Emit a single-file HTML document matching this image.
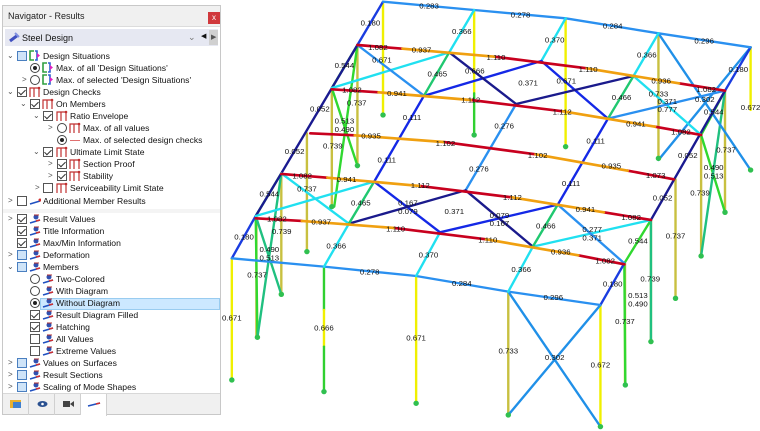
<!DOCTYPE html>
<html><head><meta charset="utf-8"><style>
*{margin:0;padding:0;box-sizing:border-box}
body{width:760px;height:431px;background:#fff;position:relative;overflow:hidden;font-family:"Liberation Sans",sans-serif;font-size:8.6px;color:#111}
.panel{position:absolute;left:2px;top:5px;width:219px;height:410px;border:1px solid #c8c8c8;background:#fff}
.title{position:absolute;left:0;top:0;width:217px;height:21px;background:#f0f0f0;border-bottom:1px solid #dcdcdc}
.title span{position:absolute;left:5px;top:5px;font-size:9px;color:#222}
.close{position:absolute;left:205px;top:6px;width:12px;height:12px;background:#d0383c;color:#fff;font-size:8px;text-align:center;line-height:12px}
.dd{position:absolute;left:2px;top:23px;width:213px;height:17px;background:#e6e8f2}
.dd span{position:absolute;left:17px;top:4px;font-size:9px}
.r{position:absolute;height:12px;white-space:nowrap}
.t{position:absolute;top:1px}
.ch{position:absolute;top:1px;font-size:8px;color:#555}
.cb{position:absolute;top:1px;width:10px;height:10px;border:1px solid #555;background:#fff}
.cb.q{background:#cfe4f8;border-color:#4a7fc0}
.cb.k::after{content:"";position:absolute;left:2px;top:0px;width:3px;height:6px;border:solid #333;border-width:0 1px 1px 0;transform:rotate(45deg)}
.rd{position:absolute;top:1px;width:10px;height:10px;border:1px solid #444;border-radius:50%;background:#fff}
.rd.on::after{content:"";position:absolute;left:2px;top:2px;width:4px;height:4px;border-radius:50%;background:#222}
.ic{position:absolute;top:0}
.tab{position:absolute;top:0;width:26px;height:21px;border-right:1px solid #d0d0d0}
</style></head><body>
<div class="panel">
<div class="title"><span>Navigator - Results</span><div class="close">x</div></div>
<div class="dd"><svg style="position:absolute;left:4px;top:3px" width="11" height="11"><path d="M1 9 L9 3" stroke="#4050c0" stroke-width="3"/><path d="M6 1 L10 5" stroke="#8090e0" stroke-width="2"/></svg><span>Steel Design</span><span style="left:183px;top:3px;color:#777">&#8964;</span><span style="left:196px;top:3px;font-size:7px">&#9664;</span><div style="position:absolute;left:204px;top:1px;width:9px;height:15px;background:#d0d0d0"></div><span style="left:206px;top:4px;font-size:7px;color:#555">&#9654;</span></div>
</div>
<div style="position:absolute;left:40px;top:298px;width:180px;height:12px;background:#cce8ff;border:1px solid #99ccf0"></div>

<svg width="0" height="0" style="position:absolute"><defs>
<g id="ds"><path d="M5 1H1V10H5" stroke="#30a040" stroke-width="1.6" fill="none"/><path d="M6 1H8V10H6" stroke="#3060d0" stroke-width="1.6" fill="none"/><path d="M8 3L11 5.5L8 8Z" fill="#e020c0"/></g>
<g id="dc"><path d="M1 11V2H10V11M5 2V11" stroke="#c03030" stroke-width="1.2" fill="none"/><circle cx="10" cy="2" r="1.3" fill="#c03030"/></g>
<g id="rs"><path d="M1 10L11 7" stroke="#2050c0" stroke-width="1.6"/><path d="M7 8L11 7" stroke="#d03030" stroke-width="1.6"/><circle cx="7" cy="4" r="2.5" fill="#3050b0"/><path d="M5 2H10" stroke="#b03030" stroke-width="1"/></g>
</defs></svg>

<div class="r" style="top:50px;left:0"><span class="ch" style="left:7px">&#8964;</span><span class="cb q" style="left:17px"></span><svg class="ic" style="left:29px" width="12" height="12"><use href="#ds"/></svg><span class="t" style="left:43px">Design Situations</span></div>
<div class="r" style="top:62px;left:0"><span class="rd on" style="left:30px"></span><svg class="ic" style="left:42px" width="12" height="12"><use href="#ds"/></svg><span class="t" style="left:56px">Max. of all 'Design Situations'</span></div>
<div class="r" style="top:74px;left:0"><span class="ch" style="left:22px">&gt;</span><span class="rd" style="left:30px"></span><svg class="ic" style="left:42px" width="12" height="12"><use href="#ds"/></svg><span class="t" style="left:56px">Max. of selected 'Design Situations'</span></div>
<div class="r" style="top:86px;left:0"><span class="ch" style="left:7px">&#8964;</span><span class="cb k" style="left:17px"></span><svg class="ic" style="left:29px" width="12" height="12"><use href="#dc"/></svg><span class="t" style="left:43px">Design Checks</span></div>
<div class="r" style="top:98px;left:0"><span class="ch" style="left:20px">&#8964;</span><span class="cb k" style="left:30px"></span><svg class="ic" style="left:42px" width="12" height="12"><use href="#dc"/></svg><span class="t" style="left:56px">On Members</span></div>
<div class="r" style="top:110px;left:0"><span class="ch" style="left:33px">&#8964;</span><span class="cb k" style="left:43px"></span><svg class="ic" style="left:56px" width="12" height="12"><use href="#dc"/></svg><span class="t" style="left:70px">Ratio Envelope</span></div>
<div class="r" style="top:122px;left:0"><span class="ch" style="left:48px">&gt;</span><span class="rd" style="left:57px"></span><svg class="ic" style="left:69px" width="12" height="12"><use href="#dc"/></svg><span class="t" style="left:83px">Max. of all values</span></div>
<div class="r" style="top:134px;left:0"><span class="rd on" style="left:57px"></span><div style="position:absolute;left:70px;top:6px;width:10px;height:1px;background:#e07070"></div><span class="t" style="left:83px">Max. of selected design checks</span></div>
<div class="r" style="top:146px;left:0"><span class="ch" style="left:33px">&#8964;</span><span class="cb k" style="left:43px"></span><svg class="ic" style="left:56px" width="12" height="12"><use href="#dc"/></svg><span class="t" style="left:70px">Ultimate Limit State</span></div>
<div class="r" style="top:158px;left:0"><span class="ch" style="left:48px">&gt;</span><span class="cb k" style="left:57px"></span><svg class="ic" style="left:69px" width="12" height="12"><use href="#dc"/></svg><span class="t" style="left:83px">Section Proof</span></div>
<div class="r" style="top:170px;left:0"><span class="ch" style="left:48px">&gt;</span><span class="cb k" style="left:57px"></span><svg class="ic" style="left:69px" width="12" height="12"><use href="#dc"/></svg><span class="t" style="left:83px">Stability</span></div>
<div class="r" style="top:182px;left:0"><span class="ch" style="left:35px">&gt;</span><span class="cb" style="left:43px"></span><svg class="ic" style="left:56px" width="12" height="12"><use href="#dc"/></svg><span class="t" style="left:70px">Serviceability Limit State</span></div>
<div class="r" style="top:195px;left:0"><span class="ch" style="left:8px">&gt;</span><span class="cb" style="left:17px"></span><svg class="ic" style="left:29px" width="12" height="12"><path d="M1 9L11 6" stroke="#2050c0" stroke-width="1.6"/><circle cx="11" cy="5" r="1.5" fill="#d03030"/></svg><span class="t" style="left:43px">Additional Member Results</span></div>
<div style="position:absolute;left:3px;top:209px;width:217px;height:4px;background:#f4f4f4"></div>

<div class="r" style="top:213px;left:0"><span class="ch" style="left:8px">&gt;</span><span class="cb k" style="left:17px"></span><svg class="ic" style="left:29px" width="12" height="12"><use href="#rs"/></svg><span class="t" style="left:43px">Result Values</span></div>
<div class="r" style="top:225px;left:0"><span class="cb k" style="left:17px"></span><svg class="ic" style="left:29px" width="12" height="12"><use href="#rs"/></svg><span class="t" style="left:43px">Title Information</span></div>
<div class="r" style="top:237px;left:0"><span class="cb k" style="left:17px"></span><svg class="ic" style="left:29px" width="12" height="12"><use href="#rs"/></svg><span class="t" style="left:43px">Max/Min Information</span></div>
<div class="r" style="top:249px;left:0"><span class="ch" style="left:8px">&gt;</span><span class="cb q" style="left:17px"></span><svg class="ic" style="left:29px" width="12" height="12"><use href="#rs"/></svg><span class="t" style="left:43px">Deformation</span></div>
<div class="r" style="top:261px;left:0"><span class="ch" style="left:7px">&#8964;</span><span class="cb q" style="left:17px"></span><svg class="ic" style="left:29px" width="12" height="12"><use href="#rs"/></svg><span class="t" style="left:43px">Members</span></div>
<div class="r" style="top:273px;left:0"><span class="rd" style="left:30px"></span><svg class="ic" style="left:42px" width="12" height="12"><use href="#rs"/></svg><span class="t" style="left:56px">Two-Colored</span></div>
<div class="r" style="top:285px;left:0"><span class="rd" style="left:30px"></span><svg class="ic" style="left:42px" width="12" height="12"><use href="#rs"/></svg><span class="t" style="left:56px">With Diagram</span></div>
<div class="r" style="top:297px;left:0"><span class="rd on" style="left:30px"></span><svg class="ic" style="left:42px" width="12" height="12"><use href="#rs"/></svg><span class="t" style="left:56px">Without Diagram</span></div>
<div class="r" style="top:309px;left:0"><span class="cb k" style="left:30px"></span><svg class="ic" style="left:42px" width="12" height="12"><use href="#rs"/></svg><span class="t" style="left:56px">Result Diagram Filled</span></div>
<div class="r" style="top:321px;left:0"><span class="cb k" style="left:30px"></span><svg class="ic" style="left:42px" width="12" height="12"><use href="#rs"/></svg><span class="t" style="left:56px">Hatching</span></div>
<div class="r" style="top:333px;left:0"><span class="cb" style="left:30px"></span><svg class="ic" style="left:42px" width="12" height="12"><use href="#rs"/></svg><span class="t" style="left:56px">All Values</span></div>
<div class="r" style="top:345px;left:0"><span class="cb" style="left:30px"></span><svg class="ic" style="left:42px" width="12" height="12"><use href="#rs"/></svg><span class="t" style="left:56px">Extreme Values</span></div>
<div class="r" style="top:357px;left:0"><span class="ch" style="left:8px">&gt;</span><span class="cb q" style="left:17px"></span><svg class="ic" style="left:29px" width="12" height="12"><use href="#rs"/></svg><span class="t" style="left:43px">Values on Surfaces</span></div>
<div class="r" style="top:369px;left:0"><span class="ch" style="left:8px">&gt;</span><span class="cb q" style="left:17px"></span><svg class="ic" style="left:29px" width="12" height="12"><use href="#rs"/></svg><span class="t" style="left:43px">Result Sections</span></div>
<div class="r" style="top:381px;left:0"><span class="ch" style="left:8px">&gt;</span><span class="cb q" style="left:17px"></span><svg class="ic" style="left:29px" width="12" height="12"><use href="#rs"/></svg><span class="t" style="left:43px">Scaling of Mode Shapes</span></div>

<div style="position:absolute;left:3px;top:393px;width:217px;height:21px;background:#f0f0f0;border-top:1px solid #d8d8d8">
<div class="tab" style="left:0"><svg style="position:absolute;left:7px;top:5px" width="12" height="11"><rect x="0" y="1" width="11" height="8" fill="#e8b030"/><rect x="3" y="3" width="8" height="6" fill="#4080d0"/></svg></div>
<div class="tab" style="left:26px"><svg style="position:absolute;left:8px;top:6px" width="11" height="8"><ellipse cx="5.5" cy="4" rx="5" ry="3" fill="#2a5090"/><circle cx="5.5" cy="4" r="1.3" fill="#fff"/></svg></div>
<div class="tab" style="left:52px"><svg style="position:absolute;left:8px;top:6px" width="11" height="8"><rect x="0" y="1" width="7" height="6" fill="#444"/><path d="M7 4L11 1V7Z" fill="#444"/></svg></div>
<div class="tab" style="left:78px;width:26px;background:#fff;height:22px"><svg style="position:absolute;left:6px;top:7px" width="14" height="6"><path d="M1 5L13 2" stroke="#2050c0" stroke-width="1.6"/><path d="M9 3L13 2" stroke="#d03030" stroke-width="1.6"/></svg></div>
</div>

<svg style="position:absolute;left:0;top:0" width="760" height="431">
<g transform="translate(225,0) scale(0.3413,0.3333)" stroke-width="7" fill="none" stroke-linecap="round">
<path d="M463 5V345" stroke="#f0f000"/>
<path d="M730 30V280" stroke="#f0f000"/><path d="M730 280V405" stroke="#30d030"/>
<path d="M998 55V440" stroke="#f0f000"/>
<path d="M1270 100V475" stroke="#c8c040"/>
<path d="M1540 142V330" stroke="#f0f000"/>
<path d="M388 135V497M313 264V620M240 400V755M165 520V883M92 648V1012" stroke="#c8c040"/>
<path d="M1465 272V637M1395 405V768M1320 538V895M1248 660V1025M1172 790V1155" stroke="#c8c040"/>
<path d="M20 775V1140" stroke="#f0f000"/>
<path d="M290 800V930" stroke="#30d030"/><path d="M290 930V1040" stroke="#f0f000"/><path d="M290 1040V1175" stroke="#30d030"/>
<path d="M560 828V1210" stroke="#f0f000"/>
<path d="M830 875V1245" stroke="#c8c040"/>
<path d="M1100 915V1280" stroke="#f0f000"/>
<path d="M388 135L313 264M313 264L388 497M165 520L90 648M1465 272L1395 405M1395 405L1465 637M1248 660L1170 790M1170 790L1173 1155M90 648L95 1012M388 135L320 620" stroke="#30d830"/>
<path d="M90 648L165 883M1248 660L1248 1025M1465 272L1395 768M165 520L95 1012" stroke="#20c080"/>
<path d="M830 875L1100 1280M1100 915L830 1245M1540 142L1270 480M1270 100L1540 510" stroke="#2090e8"/>
<path d="M463 5L388 135M90 648L20 775M1540 142L1465 272M1170 790L1100 915" stroke="#1a3ce0"/>
<path d="M388 135L165 520L90 648M1465 272L1248 660" stroke="#1a1a90"/>
<path d="M463 5L730 30L998 55L1270 100L1540 142" stroke="#2a90f0"/>
<path d="M20 775L290 800L560 828L830 875L1100 915" stroke="#2a90f0"/>
<path d="M657 157L313 264M730 30L657 157M998 55L927 183M1270 100L1197 228M1197 228L1395 405M90 648L437 545M165 520L363 671M363 671L290 800M630 697L560 828M902 740L830 875M902 740L1248 660" stroke="#20e0f0"/>
<path d="M1465 272L1122 356M975 614L1170 790M388 135L583 287M853 312L705 571" stroke="#2a90f0"/>
<path d="M585 287L927 183M927 183L1122 356M583 287L437 545M1122 356L975 614M437 545L630 697M975 614L630 697" stroke="#1428e6"/>
<path d="M657 157L853 312M853 312L1197 228M705 571L363 671M705 571L902 740" stroke="#1a1a8c"/>
<path d="M657 157L583 287M1197 228L1122 356M437 545L363 671M975 614L902 740" stroke="#20c870"/>
<g stroke-width="8">
<path d="M388 135L520 146M790 170L1060 205M1330 250L1465 272" stroke="#c8001e"/>
<path d="M520 146L790 170M1060 205L1330 250" stroke="#f0a010"/>
<path d="M313 268L450 277M720 300L990 334M1260 380L1395 405" stroke="#c8001e"/>
<path d="M450 277L720 300M990 334L1260 380" stroke="#f0a010"/>
<path d="M250 400L380 406M640 426L910 463M1180 512L1315 538" stroke="#c8001e"/>
<path d="M380 406L640 426M910 463L1180 512" stroke="#f0a010"/>
<path d="M165 522L300 533M570 558L840 592M1110 637L1248 660" stroke="#c8001e"/>
<path d="M300 533L570 558M840 592L1110 637" stroke="#f0a010"/>
<path d="M90 655L225 663M495 684L765 718M1035 766L1170 793" stroke="#c8001e"/>
<path d="M225 663L495 684M765 718L1035 766" stroke="#f0a010"/>
</g>
<g fill="#30c050" stroke="none">
<circle cx="463" cy="345" r="8"/><circle cx="730" cy="405" r="8"/><circle cx="998" cy="440" r="8"/><circle cx="1270" cy="475" r="8"/><circle cx="1540" cy="510" r="8"/>
<circle cx="388" cy="497" r="8"/><circle cx="313" cy="620" r="8"/><circle cx="240" cy="755" r="8"/><circle cx="165" cy="883" r="8"/><circle cx="95" cy="1012" r="8"/>
<circle cx="1465" cy="637" r="8"/><circle cx="1395" cy="768" r="8"/><circle cx="1320" cy="895" r="8"/><circle cx="1248" cy="1025" r="8"/><circle cx="1173" cy="1155" r="8"/>
<circle cx="20" cy="1140" r="8"/><circle cx="290" cy="1175" r="8"/><circle cx="560" cy="1210" r="8"/><circle cx="830" cy="1245" r="8"/><circle cx="1100" cy="1280" r="8"/>
</g>
<g fill="#111" stroke="none" font-family="Liberation Sans" font-size="23" text-anchor="middle">
<text x="598" y="25">0.283</text><text x="866" y="52">0.278</text><text x="1136" y="86">0.284</text><text x="1404" y="130">0.296</text>
<text x="426" y="76">0.180</text><text x="694" y="102">0.366</text><text x="966" y="128">0.370</text><text x="1236" y="172">0.366</text><text x="1504" y="216">0.180</text>
<text x="448" y="150">1.082</text><text x="576" y="158">0.937</text><text x="794" y="180">1.110</text><text x="1064" y="216">1.110</text><text x="1278" y="250">0.936</text><text x="1410" y="276">1.082</text>
<text x="350" y="204">0.544</text><text x="460" y="188">0.671</text><text x="622" y="230">0.465</text><text x="732" y="220">0.666</text><text x="888" y="256">0.371</text><text x="1000" y="250">0.671</text><text x="1162" y="300">0.466</text><text x="1270" y="290">0.733</text><text x="1296" y="312">0.371</text><text x="1406" y="306">0.302</text><text x="1296" y="336">0.777</text><text x="1432" y="344">0.544</text><text x="1540" y="330">0.672</text>
<text x="372" y="278">1.082</text><text x="504" y="288">0.941</text><text x="720" y="308">1.112</text><text x="988" y="344">1.112</text><text x="1204" y="380">0.941</text><text x="1336" y="404">1.082</text>
<text x="278" y="334">0.052</text><text x="386" y="316">0.737</text><text x="350" y="370">0.513</text><text x="350" y="396">0.490</text><text x="548" y="360">0.111</text><text x="818" y="386">0.276</text><text x="1086" y="430">0.111</text><text x="1356" y="474">0.052</text><text x="1468" y="458">0.737</text>
<text x="428" y="416">0.935</text><text x="646" y="438">1.102</text><text x="916" y="474">1.102</text><text x="1132" y="506">0.935</text><text x="1262" y="534">1.073</text>
<text x="204" y="462">0.052</text><text x="316" y="446">0.739</text><text x="474" y="488">0.111</text><text x="744" y="514">0.276</text><text x="1014" y="558">0.111</text><text x="1432" y="510">0.490</text><text x="1432" y="536">0.513</text>
<text x="226" y="536">1.082</text><text x="356" y="546">0.941</text><text x="572" y="564">1.112</text><text x="842" y="600">1.112</text><text x="1056" y="636">0.941</text><text x="1190" y="660">1.082</text>
<text x="130" y="590">0.544</text><text x="240" y="574">0.737</text><text x="398" y="616">0.465</text><text x="536" y="616">0.167</text><text x="536" y="642">0.079</text><text x="672" y="642">0.371</text><text x="804" y="654">0.079</text><text x="804" y="678">0.167</text><text x="940" y="686">0.466</text><text x="1076" y="696">0.277</text><text x="1076" y="722">0.371</text><text x="1282" y="602">0.052</text><text x="1392" y="586">0.739</text>
<text x="152" y="664">1.082</text><text x="282" y="674">0.937</text><text x="500" y="694">1.110</text><text x="770" y="728">1.110</text><text x="984" y="764">0.936</text><text x="1114" y="790">1.082</text>
<text x="56" y="718">0.180</text><text x="166" y="702">0.739</text><text x="130" y="756">0.490</text><text x="130" y="782">0.513</text><text x="326" y="746">0.366</text><text x="596" y="772">0.370</text><text x="868" y="816">0.366</text><text x="1210" y="730">0.544</text><text x="1320" y="716">0.737</text>
<text x="94" y="832">0.737</text><text x="424" y="824">0.278</text><text x="694" y="858">0.284</text><text x="962" y="900">0.296</text><text x="1136" y="860">0.180</text><text x="1246" y="844">0.739</text><text x="1210" y="894">0.513</text><text x="1210" y="920">0.490</text><text x="1172" y="972">0.737</text>
<text x="20" y="962">0.671</text><text x="290" y="992">0.666</text><text x="560" y="1022">0.671</text><text x="830" y="1060">0.733</text><text x="966" y="1080">0.302</text><text x="1100" y="1102">0.672</text>
</g>
</g></svg>
</body></html>
